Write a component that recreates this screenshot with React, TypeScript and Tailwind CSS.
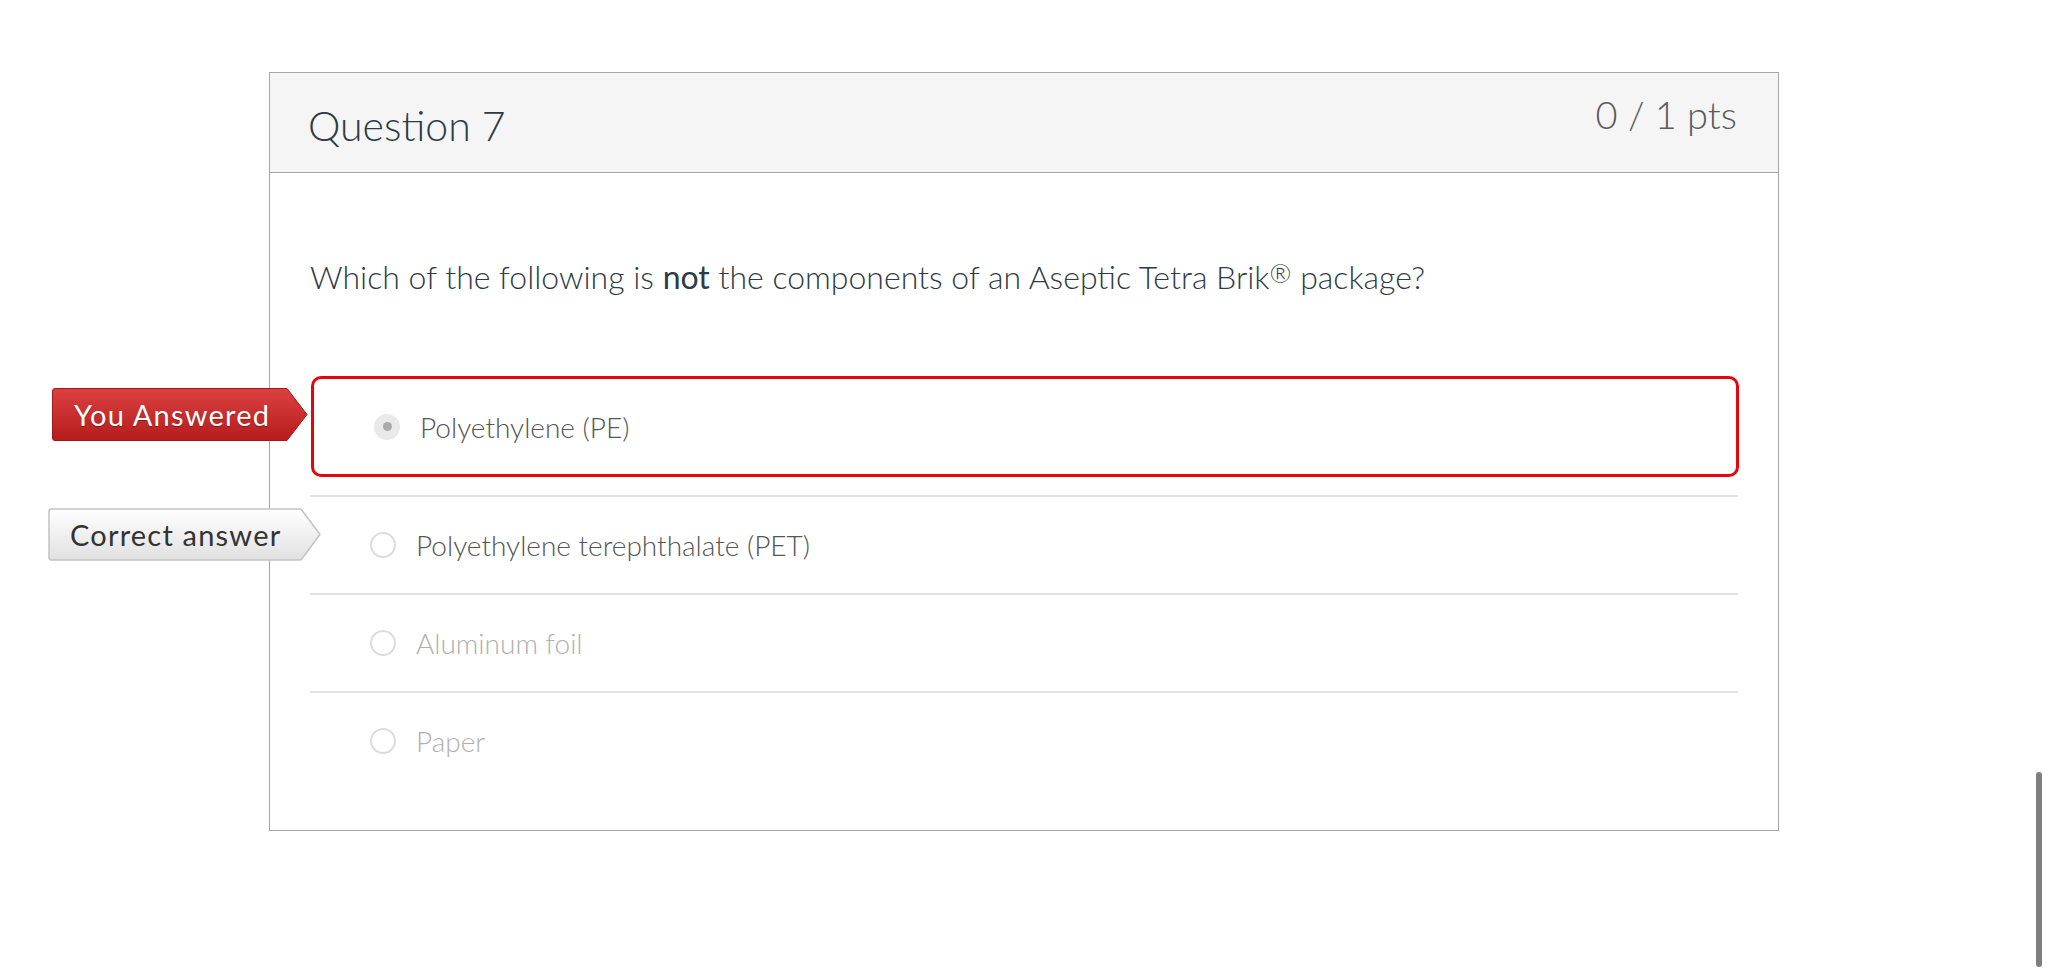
import React from "react";

type Opt = { label: string; state: "chosen" | "correct" | "plain" };

const options: Opt[] = [
  { label: "Polyethylene (PE)", state: "chosen" },
  { label: "Polyethylene terephthalate (PET)", state: "correct" },
  { label: "Aluminum foil", state: "plain" },
  { label: "Paper", state: "plain" },
];

const YouAnsweredTag = () => (
  <div className="absolute left-[-262px] top-[9px] h-[53px] w-[256px] flex items-center pl-[22px]">
    <svg className="absolute inset-0" width="256" height="53" viewBox="0 0 256 53">
      <defs>
        <linearGradient id="redg" x1="0" y1="0" x2="0" y2="1">
          <stop offset="0" stopColor="#dc4141" />
          <stop offset="1" stopColor="#b71c1c" />
        </linearGradient>
      </defs>
      <path d="M0.5 3 Q0.5 0.5 3 0.5 H235 L255 26.5 L235 52.5 H3 Q0.5 52.5 0.5 50 Z" fill="url(#redg)" stroke="#a51818" />
    </svg>
    <span className="relative text-white text-[29px] tracking-[1.2px] font-normal [text-shadow:0_1px_1px_rgba(0,0,0,0.35)]">You Answered</span>
  </div>
);

const CorrectTag = () => (
  <div className="absolute left-[-262px] top-[11px] h-[53px] w-[273px] flex items-center pl-[22px]">
    <svg className="absolute inset-0" width="273" height="53" viewBox="0 0 273 53">
      <defs>
        <linearGradient id="grayg" x1="0" y1="0" x2="0" y2="1">
          <stop offset="0" stopColor="#ffffff" />
          <stop offset="1" stopColor="#e1e1e1" />
        </linearGradient>
      </defs>
      <path d="M1 3.5 Q1 1 3.5 1 H253 L272 26.5 L253 52 H3.5 Q1 52 1 49.5 Z" fill="url(#grayg)" stroke="#c2c2c2" strokeWidth="1.5" />
    </svg>
    <span className="relative text-[#333] text-[29px] tracking-[1.2px] font-normal">Correct answer</span>
  </div>
);

const Radio = ({ chosen }: { chosen: boolean }) =>
  chosen ? (
    <span className="w-[26px] h-[26px] rounded-full bg-[#e9e9e9] flex items-center justify-center shrink-0">
      <span className="w-[9px] h-[9px] rounded-full bg-[#ababab]" />
    </span>
  ) : (
    <span className="w-[26px] h-[26px] rounded-full border-2 border-[#dcdcdc] bg-white shrink-0" />
  );

export default function App() {
  return (
    <div className="relative min-h-screen bg-white font-[Lato,sans-serif] font-light">
      <div className="pt-[72px] pl-[269px]">
        <div className="w-[1510px] border border-[#a6a6a6]">
          {/* header */}
          <div className="h-[100px] bg-[#f5f5f5] border-b border-[#a6a6a6] flex justify-between pl-[38px] pr-[41px]">
            <h2 className="mt-[28px] text-[41px] leading-[1.2] text-[#2d3b45] font-light">Question 7</h2>
            <div className="mt-[19px] text-[38px] leading-[1.2] text-[#5b5b5b] font-light">0 / 1 pts</div>
          </div>
          {/* body */}
          <div className="px-[40px] pt-[85px] pb-[41px]">
            <p className="text-[32px] leading-[1.2] text-[#2d3b45]">
              Which of the following is <span className="font-normal">not</span> the components of an Aseptic Tetra Brik
              <sup className="text-[26px] relative top-[-6px]">®</sup> package?
            </p>
            <div className="mt-[80px]">
              {options.map((o, i) =>
                o.state === "chosen" ? (
                  <div key={i} className="pb-[18px]">
                    <div className="relative ml-[1px] -mr-[1px] h-[101px] border-[3px] border-[#e8040d] rounded-[10px] flex items-center gap-[20px] pl-[60px]">
                      <YouAnsweredTag />
                      <Radio chosen />
                      <span className="text-[28px] text-[#555]">{o.label}</span>
                    </div>
                  </div>
                ) : (
                  <div key={i} className="relative h-[98px] border-t-2 border-[#e2e2e2] flex items-center gap-[20px] pl-[60px]">
                    {o.state === "correct" && <CorrectTag />}
                    <Radio chosen={false} />
                    <span className={`text-[28px] ${o.state === "correct" ? "text-[#555]" : "text-[#b0b0b0]"}`}>{o.label}</span>
                  </div>
                )
              )}
            </div>
          </div>
        </div>
      </div>
      {/* overlay scrollbar thumb */}
      <div className="absolute left-[2036px] top-[772px] w-[6px] h-[195px] rounded-full bg-[#7f7f7f]" />
    </div>
  );
}
